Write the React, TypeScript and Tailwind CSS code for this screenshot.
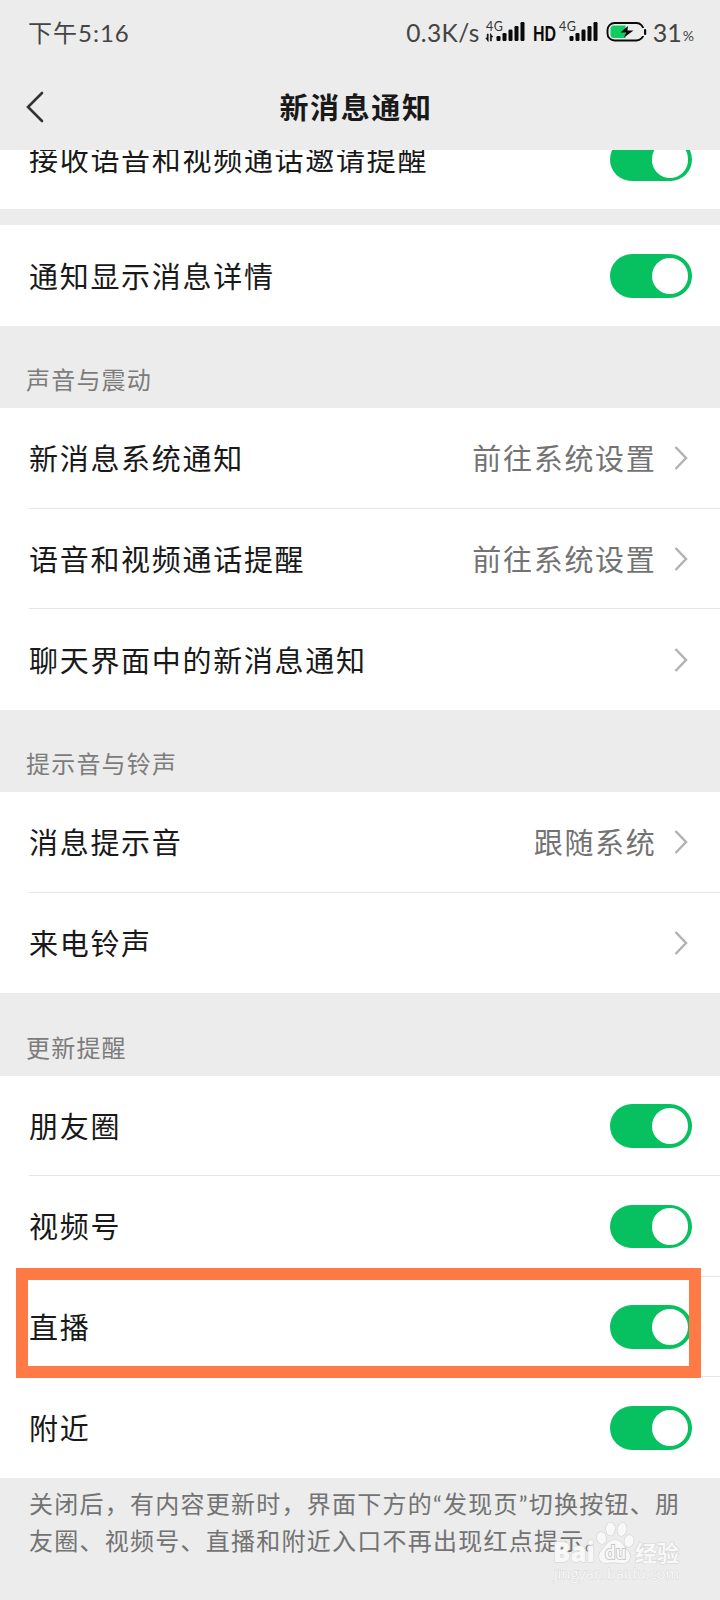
import { clsx } from "clsx";

type Row = {
  label: string;
  value?: string;
  toggle?: boolean;
  highlighted?: boolean;
};

const soundRows: Row[] = [
  { label: "新消息系统通知", value: "前往系统设置" },
  { label: "语音和视频通话提醒", value: "前往系统设置" },
  { label: "聊天界面中的新消息通知" },
];

const toneRows: Row[] = [
  { label: "消息提示音", value: "跟随系统" },
  { label: "来电铃声" },
];

const updateRows: Row[] = [
  { label: "朋友圈", toggle: true },
  { label: "视频号", toggle: true },
  { label: "直播", toggle: true, highlighted: true },
  { label: "附近", toggle: true },
];

function Toggle() {
  return (
    <span className="flex h-[43.5px] w-[82px] shrink-0 items-center justify-end rounded-full bg-[#07c160] pr-1">
      <span className="size-[36.5px] rounded-full bg-white" />
    </span>
  );
}

function Chevron() {
  return (
    <svg viewBox="0 0 14 24" fill="none" stroke="#b2b2b2" strokeWidth="2.5" className="mr-[4.5px] h-6 w-3.5 shrink-0">
      <path d="M1.5 1 12 12 1.5 23" />
    </svg>
  );
}

function SignalBars() {
  return (
    <g fill="#0a0a0a">
      <rect x="0" y="15" width="4" height="5" rx="1.2" />
      <rect x="6" y="12" width="4" height="8" rx="1.2" />
      <rect x="12" y="8.5" width="4" height="11.5" rx="1.2" />
      <rect x="18" y="5" width="4" height="15" rx="1.2" />
      <rect x="24" y="1" width="4" height="19" rx="1.2" />
    </g>
  );
}

function StatusBar() {
  return (
    <div className="flex h-16 items-center pt-0.5 pr-[26px] pl-7 text-[#444]">
      <span className="text-[24px] tracking-[1px]">下午5:16</span>
      <span className="ml-auto text-[24.5px] tracking-[0.4px]">0.3K/s</span>
      <svg viewBox="0 -3 162 32" className="ml-[5px] h-8 w-[162px] shrink-0">
        <text x="1" y="11" fontSize="12.5" textLength="17" fill="#333">4G</text>
        <path d="M2.2 14v4H.8l2.4 3.5V14zM6.4 21v-4h1.4L5.400 13.500V21z" fill="#0a0a0a" stroke="#0a0a0a" strokeWidth="0.6" />
        <g transform="translate(11.5 1)"><SignalBars /></g>
        <text x="48" y="20.5" fontSize="21" fontWeight="900" textLength="23" lengthAdjust="spacingAndGlyphs" fill="#0a0a0a">HD</text>
        <text x="74" y="11" fontSize="12.5" textLength="17" fill="#333">4G</text>
        <g transform="translate(84.5 1)"><SignalBars /></g>
        <rect x="122.5" y="3" width="36" height="17.5" rx="7" fill="none" stroke="#0a0a0a" strokeWidth="1.9" />
        <path d="M125.500 9q0-3.500 3.500-3.500h11.500v12.500H129q-3.500 0-3.500-3.500z" fill="#10cc60" />
        <path d="m143 6-7.500 6.500h5.500l-2 5 9.500-7h-6z" fill="#0a0a0a" />
        <rect x="156.5" y="8" width="4" height="8" fill="#ececec" />
        <rect x="159" y="9" width="2.2" height="6" rx="1.1" fill="#0a0a0a" />
      </svg>
      <span className="ml-1.5 -mt-0.5 text-[25px] leading-none">31</span>
      <span className="mt-1.5 ml-px text-[14px] leading-none">%</span>
    </div>
  );
}

function Header() {
  return (
    <header className="relative z-10 h-[150px] bg-[#ececec]">
      <StatusBar />
      <div className="flex h-[86px] items-center px-[26px]">
        <svg viewBox="0 0 18 32" fill="none" stroke="#333" strokeWidth="2.6" strokeLinecap="round" className="h-8 w-[18px]">
          <path d="M16 2 2 16l14 14" />
        </svg>
        <h1 className="flex-1 pt-0.5 pr-[26px] text-center text-[29px] font-bold tracking-[1.6px] text-[#191919]">新消息通知</h1>
      </div>
    </header>
  );
}

function SettingRow({ row, divider }: { row: Row; divider?: boolean }) {
  return (
    <li className="relative h-[100.5px] pl-[29px]">
      <div className={clsx("flex h-full items-center pt-px pr-7", divider && "border-b border-[#e5e5e5]")}>
        <span className="flex-1 pt-px text-[29px] tracking-[1.7px] text-[#191919]">{row.label}</span>
        {row.value && <span className="mr-[17px] pt-px text-[29px] tracking-[1.7px] text-[#737373]">{row.value}</span>}
        {row.toggle ? <Toggle /> : <Chevron />}
      </div>
      {row.highlighted && (
        <div className="absolute -top-[8.5px] left-4 z-10 h-[110px] w-[685px] border-[12.5px] border-[#ff7a45]" />
      )}
    </li>
  );
}

function Section({ title, rows }: { title: string; rows: Row[] }) {
  return (
    <section>
      <h2 className="h-[82.5px] pt-[36.5px] pl-[26px] text-[24px] leading-[36px] tracking-[1.2px] text-[#7c7c7c]">{title}</h2>
      <ul className="bg-white">
        {rows.map((row, i) => (
          <SettingRow key={row.label} row={row} divider={i < rows.length - 1} />
        ))}
      </ul>
    </section>
  );
}

function Watermark() {
  return (
    <svg viewBox="0 0 130 66" className="absolute top-[1520px] left-[552px] h-[66px] w-[130px]">
      <g fill="#f8f8f8" stroke="#d4d4d4" strokeWidth="1.2" paintOrder="stroke" className="font-['Open_Sans','Noto_Sans_CJK_SC',sans-serif]">
        <text x="1" y="42" fontSize="28" fontWeight="800" textLength="42" lengthAdjust="spacingAndGlyphs">Bai</text>
        <ellipse cx="49.5" cy="18" rx="4.5" ry="6" transform="rotate(-15 49.5 18)" />
        <ellipse cx="58.5" cy="9" rx="4.5" ry="6.5" />
        <ellipse cx="70" cy="9.5" rx="4.5" ry="6.5" transform="rotate(10 70 9.5)" />
        <ellipse cx="77" cy="21" rx="4.5" ry="6" transform="rotate(15 77 21)" />
        <path d="M63 20c7 0 8 6 12 10 5 5 4 13-4 13-5 0-11-1-16 0-9 1-10-9-5-13 4-4 6-10 13-10z" />
        <text x="83" y="41" fontSize="22" fontWeight="700" textLength="44">经验</text>
        <text x="2" y="59" fontSize="14.5" strokeWidth="0.8" textLength="125">jingyan.baidu.com</text>
      </g>
      <text x="53" y="39" fontSize="18" fontWeight="700" textLength="21" fill="#f8f8f8" stroke="#c8c8c8" strokeWidth="1.8" paintOrder="stroke">du</text>
    </svg>
  );
}

export default function App() {
  return (
    <div className="relative h-[1600px] w-[720px] overflow-hidden bg-[#ececec] font-['Lato','Noto_Sans_CJK_SC',sans-serif]">
      <Header />

      {/* scrolled partly under the header */}
      <ul className="-mt-[41.5px] bg-white">
        <SettingRow row={{ label: "接收语音和视频通话邀请提醒", toggle: true }} />
      </ul>
      <ul className="mt-4 bg-white">
        <SettingRow row={{ label: "通知显示消息详情", toggle: true }} />
      </ul>

      <Section title="声音与震动" rows={soundRows} />
      <Section title="提示音与铃声" rows={toneRows} />
      <Section title="更新提醒" rows={updateRows} />

      <p className="pt-[7px] pl-[29px] text-[24px] leading-[37px] tracking-[1.25px] whitespace-nowrap text-[#737373]">
        关闭后，有内容更新时，界面下方的“发现页”切换按钮、朋
        <br />
        友圈、视频号、直播和附近入口不再出现红点提示。
      </p>

      <Watermark />
    </div>
  );
}
